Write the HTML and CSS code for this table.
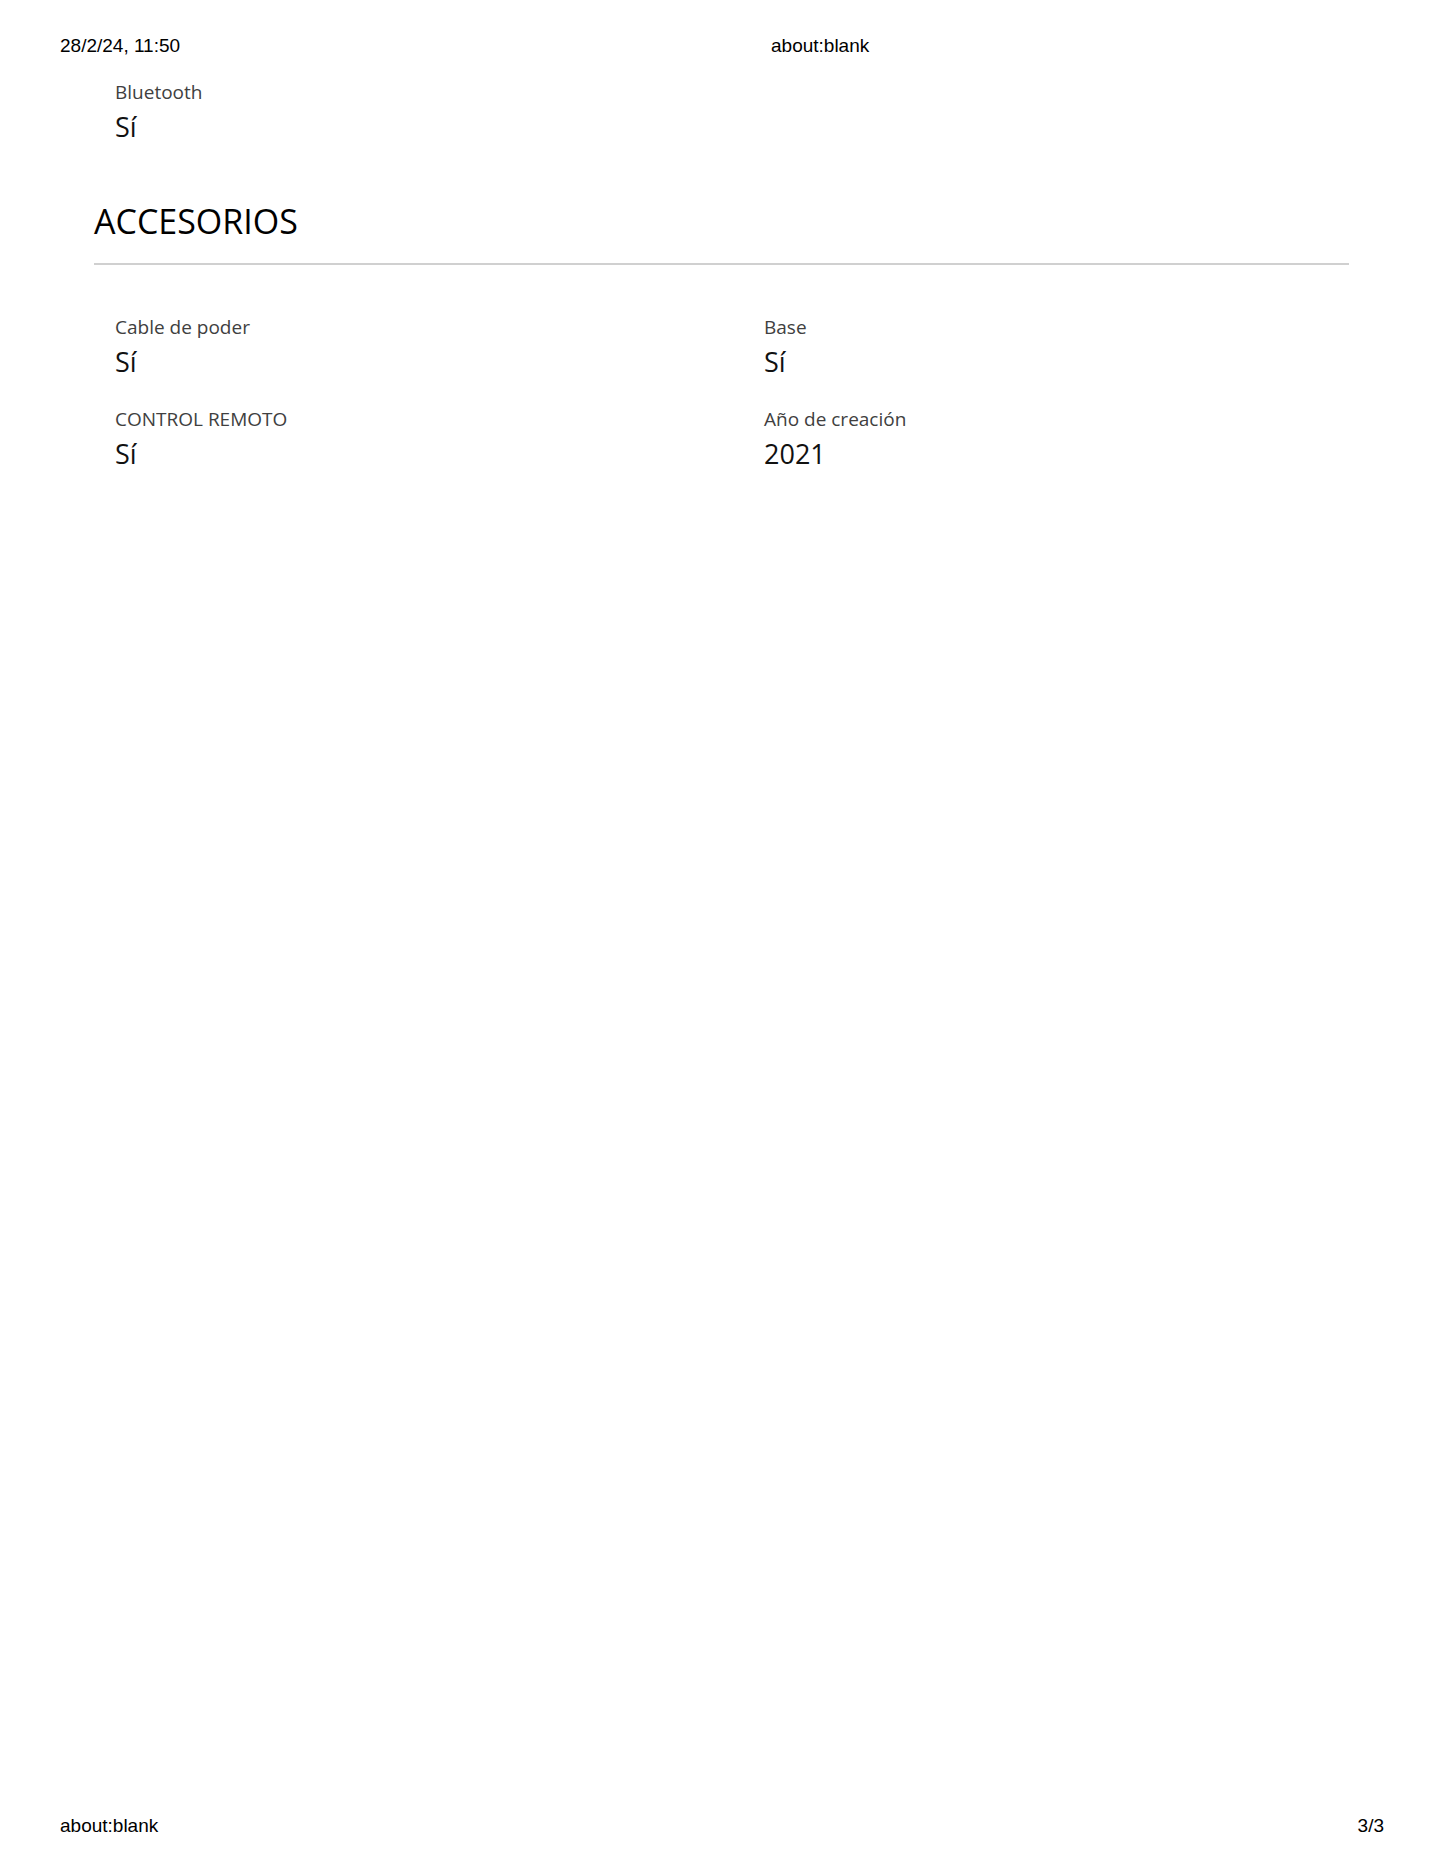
FILE: index.html
```html
<!DOCTYPE html>
<html lang="es">
<head>
  <meta charset="UTF-8" />
  <meta name="viewport" content="width=device-width, initial-scale=1.0" />
  <title>about:blank</title>
  <link rel="stylesheet" href="styles.css">
</head>
<body>
  <header class="print-head">
    <span class="print-date">28/2/24, 11:50</span>
    <span class="print-title">about:blank</span>
  </header>

  <main class="specs">
    <div class="spec-list">
      <div class="spec">
        <div class="spec-label">Bluetooth</div>
        <div class="spec-value">Sí</div>
      </div>
    </div>

    <h2 class="spec-title">ACCESORIOS</h2>
    <div class="spec-list spec-grid">
      <div class="spec">
        <div class="spec-label">Cable de poder</div>
        <div class="spec-value">Sí</div>
      </div>
      <div class="spec">
        <div class="spec-label">Base</div>
        <div class="spec-value">Sí</div>
      </div>
      <div class="spec">
        <div class="spec-label">CONTROL REMOTO</div>
        <div class="spec-value">Sí</div>
      </div>
      <div class="spec">
        <div class="spec-label">Año de creación</div>
        <div class="spec-value">2021</div>
      </div>
    </div>
  </main>

  <footer class="print-foot">
    <span>about:blank</span>
    <span>3/3</span>
  </footer>
</body>
</html>
```

FILE: styles.css
```css
body {
  margin: 0;
  min-height: 100vh;
  display: flex;
  flex-direction: column;
  background: #fff;
  color: #000;
  font-family: 'Open Sans', 'Noto Sans', sans-serif;
}
.print-head, .print-foot {
  font-family: 'Liberation Sans', Arial, sans-serif;
  font-size: 19px;
  line-height: 21px;
}
.print-head {
  display: grid;
  grid-template-columns: 711px auto;
  padding: 35px 0 0 60px;
}
.print-foot {
  display: flex;
  justify-content: space-between;
  margin-top: auto;
  padding: 0 61px 33px 60px;
}
.specs {
  margin: 24px 96px 0 94px;
}
.spec-list {
  display: grid;
  grid-template-columns: 649px 1fr;
  row-gap: 28px;
  padding-left: 21px;
}
.spec-grid {
  padding-top: 50px;
}
.spec-label {
  font-size: 19px;
  line-height: 24px;
  color: #404040;
}
.spec-value {
  margin-top: 5px;
  font-size: 27px;
  line-height: 35px;
  color: #111;
}
.spec-title {
  margin: 57px 0 0;
  padding-bottom: 22px;
  border-bottom: 2px solid #d0d0d0;
  font-size: 34px;
  line-height: 40px;
  font-weight: 400;
  color: #000;
}
```
